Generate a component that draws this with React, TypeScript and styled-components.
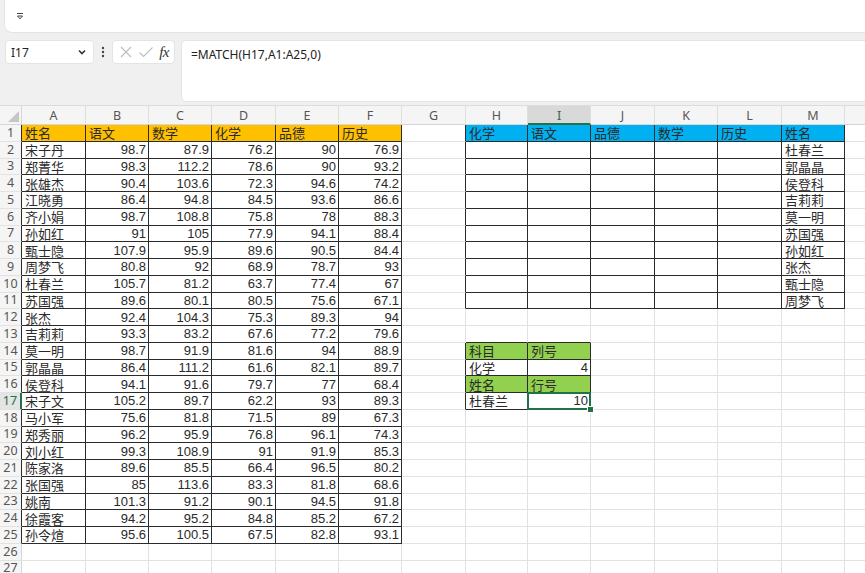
import React from "react";
import styled, { createGlobalStyle } from "styled-components";

const GlobalStyle = createGlobalStyle`
  html, body {
    margin: 0;
    padding: 0;
    background: #f0f0f0;
  }
`;

const COL_WIDTHS = [64, 63, 63, 64, 63, 63, 64, 62, 63, 64, 63, 64, 63, 63];
const LETTERS = ["A", "B", "C", "D", "E", "F", "G", "H", "I", "J", "K", "L", "M", "N"];
const ROW_COUNT = 27;

const students: (string | number)[][] = [
  ["宋子丹", 98.7, 87.9, 76.2, 90, 76.9],
  ["郑菁华", 98.3, 112.2, 78.6, 90, 93.2],
  ["张雄杰", 90.4, 103.6, 72.3, 94.6, 74.2],
  ["江晓勇", 86.4, 94.8, 84.5, 93.6, 86.6],
  ["齐小娟", 98.7, 108.8, 75.8, 78, 88.3],
  ["孙如红", 91, 105, 77.9, 94.1, 88.4],
  ["甄士隐", 107.9, 95.9, 89.6, 90.5, 84.4],
  ["周梦飞", 80.8, 92, 68.9, 78.7, 93],
  ["杜春兰", 105.7, 81.2, 63.7, 77.4, 67],
  ["苏国强", 89.6, 80.1, 80.5, 75.6, 67.1],
  ["张杰", 92.4, 104.3, 75.3, 89.3, 94],
  ["吉莉莉", 93.3, 83.2, 67.6, 77.2, 79.6],
  ["莫一明", 98.7, 91.9, 81.6, 94, 88.9],
  ["郭晶晶", 86.4, 111.2, 61.6, 82.1, 89.7],
  ["侯登科", 94.1, 91.6, 79.7, 77, 68.4],
  ["宋子文", 105.2, 89.7, 62.2, 93, 89.3],
  ["马小军", 75.6, 81.8, 71.5, 89, 67.3],
  ["郑秀丽", 96.2, 95.9, 76.8, 96.1, 74.3],
  ["刘小红", 99.3, 108.9, 91, 91.9, 85.3],
  ["陈家洛", 89.6, 85.5, 66.4, 96.5, 80.2],
  ["张国强", 85, 113.6, 83.3, 81.8, 68.6],
  ["姚南", 101.3, 91.2, 90.1, 94.5, 91.8],
  ["徐霞客", 94.2, 95.2, 84.8, 85.2, 67.2],
  ["孙令煊", 95.6, 100.5, 67.5, 82.8, 93.1],
];

const lookupHeads = ["化学", "语文", "品德", "数学", "历史", "姓名"];
const lookupNames = ["杜春兰", "郭晶晶", "侯登科", "吉莉莉", "莫一明", "苏国强", "孙如红", "张杰", "甄士隐", "周梦飞"];

// sparse sheet: key "r,c" (c is 0-based column index)
const values: Record<string, string | number> = {};
["姓名", "语文", "数学", "化学", "品德", "历史"].forEach((h, c) => (values[`1,${c}`] = h));
students.forEach((row, i) => row.forEach((v, c) => (values[`${i + 2},${c}`] = v)));
lookupHeads.forEach((h, i) => (values[`1,${i + 7}`] = h));
lookupNames.forEach((n, i) => (values[`${i + 2},12`] = n));
values["14,7"] = "科目";
values["14,8"] = "列号";
values["15,7"] = "化学";
values["15,8"] = 4;
values["16,7"] = "姓名";
values["16,8"] = "行号";
values["17,7"] = "杜春兰";
values["17,8"] = 10;

const boxes = [
  { r1: 1, r2: 25, c1: 0, c2: 5 },
  { r1: 1, r2: 11, c1: 7, c2: 12 },
  { r1: 14, r2: 17, c1: 7, c2: 8 },
];
const boxed = (r: number, c: number) =>
  boxes.some((b) => r >= b.r1 && r <= b.r2 && c >= b.c1 && c <= b.c2);

const fillOf = (r: number, c: number): string | undefined => {
  if (r === 1 && c <= 5) return "#ffc000";
  if (r === 1 && c >= 7 && c <= 12) return "#00b0f0";
  if ((r === 14 || r === 16) && (c === 7 || c === 8)) return "#92d050";
  return undefined;
};

const SEL_ROW = 17;
const SEL_COL = 8;

const Page = styled.div`
  width: 865px;
  height: 573px;
  overflow: hidden;
  background: #f0f0f0;
  font-family: "Noto Sans", "Noto Sans CJK SC", sans-serif;
`;

const QuickBar = styled.div`
  box-sizing: border-box;
  height: 33px;
  margin: 0 -12px 0 4px;
  background: #fff;
  border: 1px solid #e3e3e3;
  border-top: none;
  border-radius: 0 0 8px 8px;
  display: flex;
  align-items: center;
  padding-left: 10px;
`;

const FormulaRow = styled.div`
  display: flex;
  align-items: flex-start;
  height: 62px;
  margin-top: 7px;
  padding-left: 5px;
`;

const NameBox = styled.div`
  box-sizing: border-box;
  width: 89px;
  height: 24px;
  background: #fff;
  border: 1px solid #e4e4e4;
  border-radius: 4px;
  display: flex;
  align-items: center;
  justify-content: space-between;
  padding: 0 6px 0 5px;
  font-size: 12px;
  color: #222;
`;

const Dots = styled.div`
  width: 18px;
  height: 24px;
  display: flex;
  align-items: center;
  justify-content: center;
`;

const ActionBox = styled.div`
  box-sizing: border-box;
  width: 63px;
  height: 24px;
  background: #fff;
  border: 1px solid #e4e4e4;
  border-radius: 4px;
  display: flex;
  align-items: center;
  justify-content: space-between;
  padding: 0 5px 0 6px;
`;

const Fx = styled.span`
  font-family: "Liberation Serif", "DejaVu Serif", serif;
  font-style: italic;
  font-size: 15px;
  color: #333;
  letter-spacing: -0.5px;
`;

const FormulaInput = styled.div`
  box-sizing: border-box;
  flex: 1;
  height: 62px;
  margin: 0 -8px 0 6px;
  background: #fff;
  border: 1px solid #e4e4e4;
  border-radius: 5px;
  padding: 5px 9px;
  font-size: 12px;
  color: #222;
`;

const Sheet = styled.div`
  margin-top: 3px;
  display: grid;
  grid-template-columns: 22px ${COL_WIDTHS.map((w) => `${w}px`).join(" ")};
  grid-template-rows: 19px repeat(${ROW_COUNT}, 16.75px);
  background: #fff;
  border-top: 1px solid #dcdcdc;
`;

const Corner = styled.div`
  background: #f5f5f5;
  border-right: 1px solid #d6d6d6;
  border-bottom: 1px solid #d6d6d6;
  display: flex;
  align-items: flex-end;
  justify-content: flex-end;
  padding: 0 2px 2px 0;
  box-sizing: border-box;
`;

const ColHead = styled.div<{ $active?: boolean }>`
  box-sizing: border-box;
  background: ${(p) => (p.$active ? "#d9d9d9" : "#f5f5f5")};
  border-right: 1px solid #dedede;
  border-bottom: ${(p) => (p.$active ? "2px solid #217346" : "1px solid #d6d6d6")};
  display: flex;
  align-items: center;
  justify-content: center;
  font-size: 12.5px;
  color: ${(p) => (p.$active ? "#2f6b45" : "#555")};
  padding-top: 1px;
`;

const RowHead = styled.div<{ $active?: boolean; $dark?: boolean }>`
  box-sizing: border-box;
  background: ${(p) => (p.$active ? "#e4e4e4" : "#f5f5f5")};
  border-right: ${(p) =>
    p.$active ? "2px solid #217346" : `1px solid ${p.$dark ? "#2b2b2b" : "#d6d6d6"}`};
  border-bottom: 1px solid #e2e2e2;
  display: flex;
  align-items: center;
  justify-content: center;
  font-size: 12.5px;
  line-height: 14px;
  color: ${(p) => (p.$active ? "#217346" : "#555")};
`;

const Cell = styled.div<{
  $fill?: string;
  $num: boolean;
  $rDark: boolean;
  $bDark: boolean;
  $selected?: boolean;
}>`
  position: relative;
  box-sizing: border-box;
  background: ${(p) => p.$fill ?? "#fff"};
  border-right: 1px solid ${(p) => (p.$rDark ? "#2b2b2b" : "#e2e2e2")};
  border-bottom: 1px solid ${(p) => (p.$bDark ? "#2b2b2b" : "#e2e2e2")};
  display: flex;
  align-items: center;
  justify-content: ${(p) => (p.$num ? "flex-end" : "flex-start")};
  padding: 1px 2px 0 3px;
  white-space: nowrap;
  overflow: ${(p) => (p.$selected ? "visible" : "hidden")};
  font-family: ${(p) =>
    p.$num ? `"Liberation Sans", Arial, sans-serif` : `"Noto Sans CJK SC", sans-serif`};
  font-size: 13px;
  line-height: 14px;
  color: #2a2a2a;
  z-index: ${(p) => (p.$selected ? 2 : "auto")};

  ${(p) =>
    p.$selected &&
    `
    &::after {
      content: "";
      position: absolute;
      top: -1px;
      left: -1px;
      right: -1px;
      bottom: -1px;
      border: 2px solid #217346;
    }
    &::before {
      content: "";
      position: absolute;
      right: -4px;
      bottom: -4px;
      width: 5px;
      height: 5px;
      background: #217346;
      border: 1px solid #fff;
      z-index: 3;
    }
  `}
`;

const QatIcon = () => (
  <svg width="10" height="10" viewBox="0 0 10 10">
    <path d="M2 2.5h6" stroke="#444" strokeWidth="1" />
    <path d="M2.5 5h5L5 7.8z" fill="none" stroke="#444" strokeWidth="1" strokeLinejoin="round" />
  </svg>
);

const Chevron = () => (
  <svg width="10" height="10" viewBox="0 0 10 10">
    <path d="M2 3.5l3 3 3-3" fill="none" stroke="#333" strokeWidth="1.6" />
  </svg>
);

const VDots = () => (
  <svg width="4" height="12" viewBox="0 0 4 12">
    <circle cx="2" cy="2" r="1.2" fill="#444" />
    <circle cx="2" cy="6" r="1.2" fill="#444" />
    <circle cx="2" cy="10" r="1.2" fill="#444" />
  </svg>
);

const CrossIcon = () => (
  <svg width="14" height="14" viewBox="0 0 14 14">
    <path d="M2 2l10 10M12 2L2 12" stroke="#bdbdbd" strokeWidth="1.1" />
  </svg>
);

const CheckIcon = () => (
  <svg width="16" height="14" viewBox="0 0 16 14">
    <path d="M1.5 7.5l4 4L14.5 2.5" fill="none" stroke="#bdbdbd" strokeWidth="1.1" />
  </svg>
);

const CornerMark = () => (
  <svg width="11" height="11" viewBox="0 0 11 11">
    <path d="M11 0V11H0z" fill="#c6c6c6" />
  </svg>
);

const rows = Array.from({ length: ROW_COUNT }, (_, i) => i + 1);
const cols = Array.from({ length: LETTERS.length }, (_, i) => i);

export default function App() {
  return (
    <Page>
      <GlobalStyle />
      <QuickBar>
        <QatIcon />
      </QuickBar>
      <FormulaRow>
        <NameBox>
          <span>I17</span>
          <Chevron />
        </NameBox>
        <Dots>
          <VDots />
        </Dots>
        <ActionBox>
          <CrossIcon />
          <CheckIcon />
          <Fx>fx</Fx>
        </ActionBox>
        <FormulaInput>=MATCH(H17,A1:A25,0)</FormulaInput>
      </FormulaRow>
      <Sheet>
        <Corner>
          <CornerMark />
        </Corner>
        {cols.map((c) => (
          <ColHead key={`h${c}`} $active={c === SEL_COL}>
            {LETTERS[c]}
          </ColHead>
        ))}
        {rows.map((r) => (
          <React.Fragment key={r}>
            <RowHead $active={r === SEL_ROW} $dark={boxed(r, 0)}>
              {r}
            </RowHead>
            {cols.map((c) => {
              const v = values[`${r},${c}`];
              return (
                <Cell
                  key={c}
                  $fill={fillOf(r, c)}
                  $num={typeof v === "number"}
                  $rDark={boxed(r, c) || boxed(r, c + 1)}
                  $bDark={boxed(r, c) || boxed(r + 1, c)}
                  $selected={r === SEL_ROW && c === SEL_COL}
                >
                  {v ?? ""}
                </Cell>
              );
            })}
          </React.Fragment>
        ))}
      </Sheet>
    </Page>
  );
}
